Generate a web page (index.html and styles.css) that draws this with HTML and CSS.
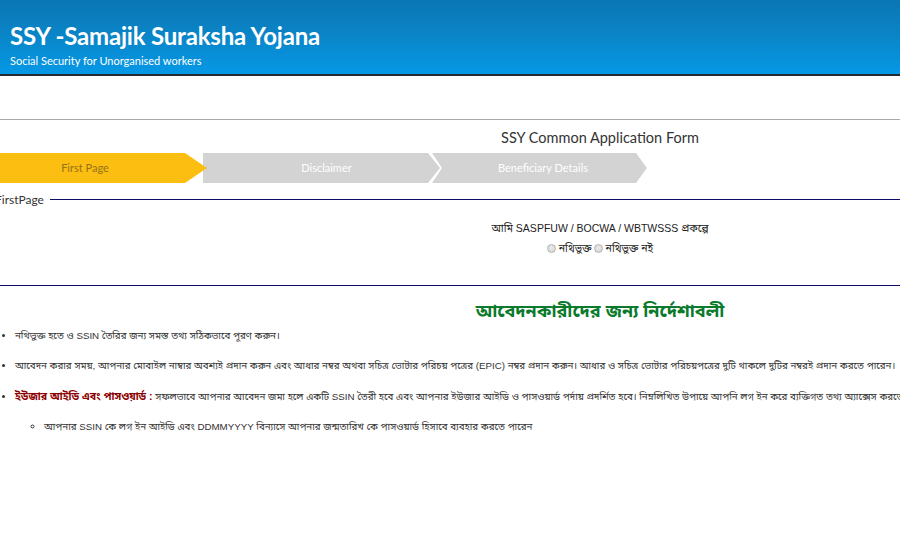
FILE: index.html
```html
<!DOCTYPE html>
<html lang="bn">
<head>
<meta charset="utf-8">
<title>SSY -Samajik Suraksha Yojana</title>
<link rel="stylesheet" href="styles.css">
</head>
<body>
<header class="site-header">
  <h1 class="site-title">SSY -Samajik Suraksha Yojana</h1>
  <p class="site-sub">Social Security for Unorganised workers</p>
</header>

<main class="content">
  <div class="rule"></div>
  <h2 class="form-title">SSY Common Application Form</h2>

  <div class="steps">
    <div class="step step-active">First Page</div>
    <div class="step step-mid">Disclaimer</div>
    <div class="step step-last">Beneficiary Details</div>
  </div>

  <fieldset class="firstpage">
    <legend class="fp-legend">FirstPage</legend>
    <p class="fp-question">আমি SASPFUW / BOCWA / WBTWSSS প্রকল্পে</p>
    <div class="fp-radios">
      <label class="radio"><span class="radio-dot"></span>নথিভুক্ত</label>
      <label class="radio"><span class="radio-dot"></span>নথিভুক্ত নই</label>
    </div>
  </fieldset>

  <h3 class="instr-title">আবেদনকারীদের জন্য নির্দেশাবলী</h3>
  <ul class="instr">
    <li>নথিভুক্ত হতে ও SSIN তৈরির জন্য সমস্ত তথ্য সঠিকভাবে পূরণ করুন।</li>
    <li>আবেদন করার সময়, আপনার মোবাইল নাম্বার অবশ্যই প্রদান করুন এবং আধার নম্বর অথবা সচিত্র ভোটার পরিচয় পত্রের (EPIC) নম্বর প্রদান করুন। আধার ও সচিত্র ভোটার পরিচয়পত্রের দুটি থাকলে দুটির নম্বরই প্রদান করতে পারেন।</li>
    <li><strong class="em-red">ইউজার আইডি এবং পাসওয়ার্ড :</strong> সফলভাবে আপনার আবেদন জমা হলে একটি SSIN তৈরী হবে এবং আপনার ইউজার আইডি ও পাসওয়ার্ড পর্দায় প্রদর্শিত হবে। নিম্নলিখিত উপায়ে আপনি লগ ইন করে ব্যক্তিগত তথ্য অ্যাক্সেস করতে পারেন
      <ul class="instr-sub">
        <li>আপনার SSIN কে লগ ইন আইডি এবং DDMMYYYY বিন্যাসে আপনার জন্মতারিখ কে পাসওয়ার্ড হিসাবে ব্যবহার করতে পারেন</li>
      </ul>
    </li>
  </ul>
</main>
</body>
</html>
```

FILE: styles.css
```css
html, body {
  margin: 0;
  padding: 0;
  overflow: hidden;
  background: #fff;
}
body {
  width: 900px;
  font-family: "Liberation Sans", "Noto Sans Bengali", "Lohit Bengali", "FreeSans", sans-serif;
  color: #333;
}

.site-header {
  height: 76px;
  box-sizing: border-box;
  padding: 21px 0 0 10px;
  background: linear-gradient(to bottom, #0a76b4 0%, #0a84c6 45%, #0598e6 100%);
  border-bottom: 2px solid #252a2e;
  color: #fff;
}
.site-title {
  margin: 0;
  font-family: "Lato", "Open Sans", sans-serif;
  font-weight: 700;
  font-size: 24px;
  line-height: 30px;
  letter-spacing: -0.2px;
}
.site-sub {
  margin: 3px 0 0;
  font-family: "Lato", "Open Sans", sans-serif;
  font-size: 11px;
  line-height: 14px;
}

.content {
  width: 1200px;
}
.rule {
  margin-top: 43px;
  height: 1px;
  width: 900px;
  background: #a9a9a9;
}
.form-title {
  margin: 9px 0 0;
  text-align: center;
  font-family: "Lato", "Open Sans", sans-serif;
  font-weight: 400;
  font-size: 14.5px;
  line-height: 18px;
  color: #333;
}

.steps {
  display: flex;
  margin: 6px 0 0 -15px;
  height: 30px;
}
.step {
  height: 30px;
  line-height: 30px;
  text-align: center;
  font-family: "Lato", "Open Sans", sans-serif;
  font-size: 11px;
  color: #fff;
  background: #d3d3d3;
  box-sizing: border-box;
}
.step-active {
  width: 222px;
  padding-right: 22px;
  background: #fcbe10;
  color: #94731a;
  position: relative;
  z-index: 2;
  clip-path: polygon(0 0, calc(100% - 22px) 0, 100% 50%, calc(100% - 22px) 100%, 0 100%);
}
.step-mid {
  width: 237px;
  margin-left: -4px;
  padding-left: 22px;
  padding-right: 12px;
  position: relative;
  z-index: 1;
  clip-path: polygon(0 0, calc(100% - 12px) 0, 100% 50%, calc(100% - 12px) 100%, 0 100%);
}
.step-last {
  width: 215px;
  margin-left: -8px;
  padding-left: 18px;
  padding-right: 11px;
  clip-path: polygon(0 0, calc(100% - 11px) 0, 100% 50%, calc(100% - 11px) 100%, 0 100%, 10px 50%);
}

.firstpage {
  margin: 9px 0 0 -18px;
  padding: 0;
  border: 1px solid #0c0c6a;
  height: 94px;
  box-sizing: border-box;
  min-width: 0;
  width: 1236px;
}
.fp-legend {
  margin-left: 2px;
  padding: 0 6px 0 10px;
  font-family: "Lato", "Open Sans", sans-serif;
  font-size: 12px;
  color: #333;
}
.fp-question {
  margin: 13px 0 0;
  text-align: center;
  font-size: 10.5px;
  line-height: 16px;
  color: #222;
}
.fp-radios {
  display: flex;
  justify-content: center;
  gap: 2px;
  margin-top: 5px;
  font-size: 10.5px;
  line-height: 14px;
  color: #222;
}
.radio {
  display: flex;
  align-items: center;
}
.radio-dot {
  width: 7px;
  height: 7px;
  border-radius: 50%;
  border: 1px solid #b5b5b5;
  background: radial-gradient(circle at 50% 40%, #eee, #ccc);
  margin-right: 3px;
}

.instr-title {
  margin: 12px 0 0;
  text-align: center;
  font-size: 18px;
  line-height: 26px;
  font-weight: 700;
  color: #0b7a2c;
}
.instr {
  margin: 5px 0 0;
  padding-left: 15px;
  font-size: 9.75px;
  line-height: 14px;
  color: #333;
}
.instr > li {
  margin-bottom: 16px;
  white-space: nowrap;
}
.em-red {
  color: #8b0000;
  font-size: 10.5px;
}
.instr-sub {
  list-style: circle;
  margin: 16px 0 0;
  padding-left: 29px;
}
```
